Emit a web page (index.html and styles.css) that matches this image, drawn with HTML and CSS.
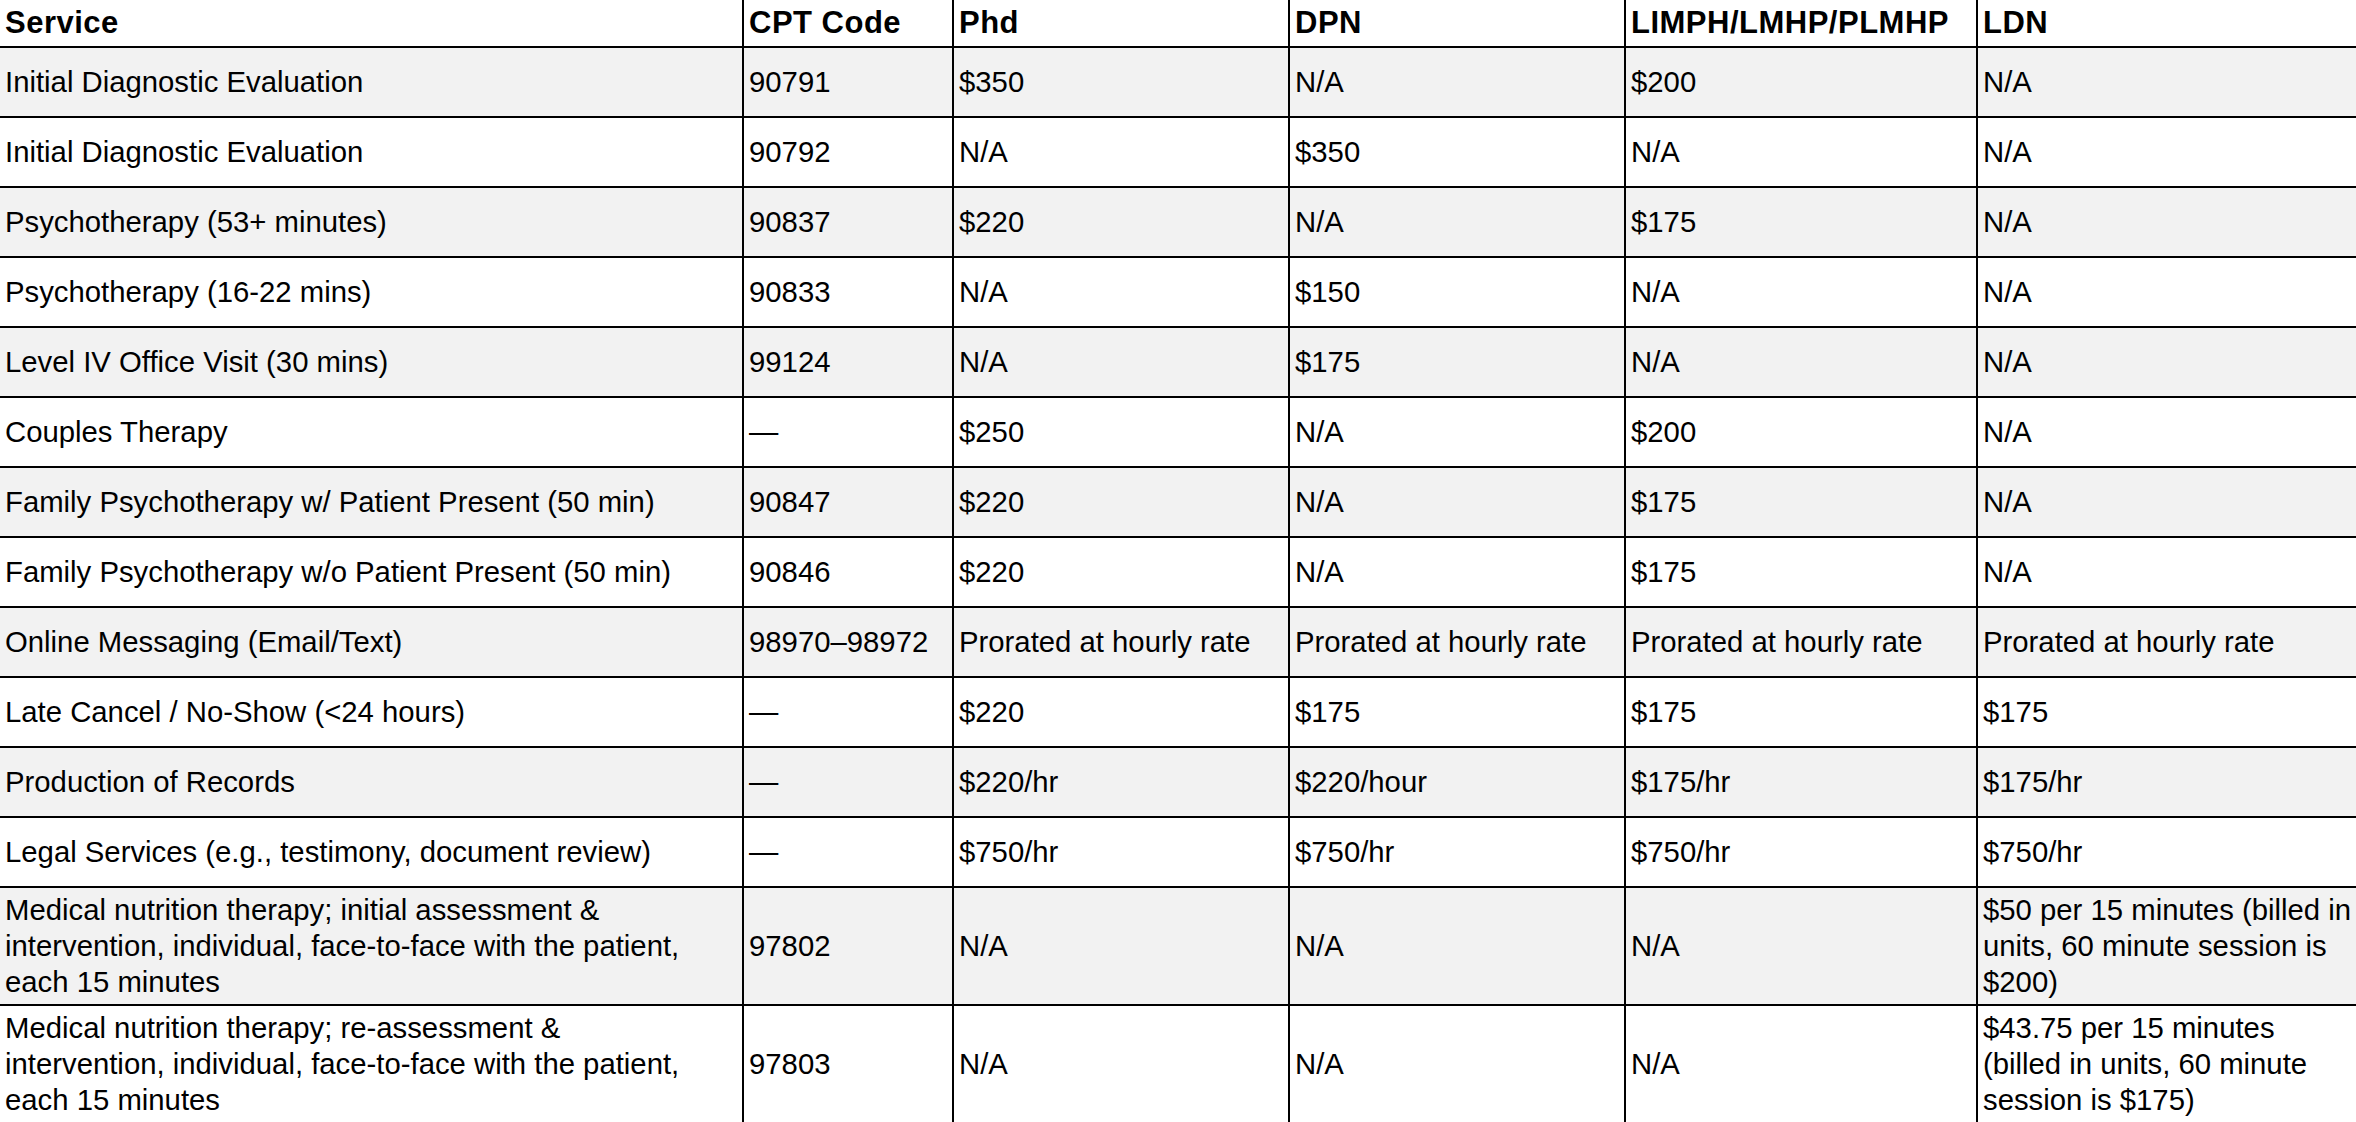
FILE: index.html
```html
<!DOCTYPE html>
<html lang="en">
<head>
<meta charset="utf-8">
<title>Fee Schedule</title>
<link rel="stylesheet" href="styles.css">
</head>
<body>
<table class="fees">
  <colgroup>
    <col class="c-service">
    <col class="c-cpt">
    <col class="c-phd">
    <col class="c-dpn">
    <col class="c-limph">
    <col class="c-ldn">
  </colgroup>
  <thead>
    <tr>
      <th>Service</th>
      <th>CPT Code</th>
      <th>Phd</th>
      <th>DPN</th>
      <th>LIMPH/LMHP/PLMHP</th>
      <th class="last">LDN</th>
    </tr>
  </thead>
  <tbody>
    <tr><td>Initial Diagnostic Evaluation</td><td>90791</td><td>$350</td><td>N/A</td><td>$200</td><td class="last">N/A</td></tr>
    <tr><td>Initial Diagnostic Evaluation</td><td>90792</td><td>N/A</td><td>$350</td><td>N/A</td><td class="last">N/A</td></tr>
    <tr><td>Psychotherapy (53+ minutes)</td><td>90837</td><td>$220</td><td>N/A</td><td>$175</td><td class="last">N/A</td></tr>
    <tr><td>Psychotherapy (16-22 mins)</td><td>90833</td><td>N/A</td><td>$150</td><td>N/A</td><td class="last">N/A</td></tr>
    <tr><td>Level IV Office Visit (30 mins)</td><td>99124</td><td>N/A</td><td>$175</td><td>N/A</td><td class="last">N/A</td></tr>
    <tr><td>Couples Therapy</td><td>—</td><td>$250</td><td>N/A</td><td>$200</td><td class="last">N/A</td></tr>
    <tr><td>Family Psychotherapy w/ Patient Present (50 min)</td><td>90847</td><td>$220</td><td>N/A</td><td>$175</td><td class="last">N/A</td></tr>
    <tr><td>Family Psychotherapy w/o Patient Present (50 min)</td><td>90846</td><td>$220</td><td>N/A</td><td>$175</td><td class="last">N/A</td></tr>
    <tr><td>Online Messaging (Email/Text)</td><td>98970–98972</td><td>Prorated at hourly rate</td><td>Prorated at hourly rate</td><td>Prorated at hourly rate</td><td class="last">Prorated at hourly rate</td></tr>
    <tr><td>Late Cancel / No-Show (&lt;24 hours)</td><td>—</td><td>$220</td><td>$175</td><td>$175</td><td class="last">$175</td></tr>
    <tr><td>Production of Records</td><td>—</td><td>$220/hr</td><td>$220/hour</td><td>$175/hr</td><td class="last">$175/hr</td></tr>
    <tr><td>Legal Services (e.g., testimony, document review)</td><td>—</td><td>$750/hr</td><td>$750/hr</td><td>$750/hr</td><td class="last">$750/hr</td></tr>
    <tr><td>Medical nutrition therapy; initial assessment &amp; intervention, individual, face-to-face with the patient, each 15 minutes</td><td>97802</td><td>N/A</td><td>N/A</td><td>N/A</td><td class="last">$50 per 15 minutes (billed in units, 60 minute session is $200)</td></tr>
    <tr><td>Medical nutrition therapy; re-assessment &amp; intervention, individual, face-to-face with the patient, each 15 minutes</td><td>97803</td><td>N/A</td><td>N/A</td><td>N/A</td><td class="last">$43.75 per 15 minutes (billed in units, 60 minute session is $175)</td></tr>
  </tbody>
</table>
</body>
</html>
```

FILE: styles.css
```css
html, body {
  margin: 0;
  padding: 0;
  background: #ffffff;
}

body {
  font-family: "Liberation Sans", Arial, Helvetica, sans-serif;
  color: #000000;
}

.fees {
  width: 2356px;
  table-layout: fixed;
  border-collapse: collapse;
  border-style: hidden;
}

.c-service { width: 743px; }
.c-cpt { width: 210px; }
.c-phd { width: 336px; }
.c-dpn { width: 336px; }
.c-limph { width: 352px; }
.c-ldn { width: 379px; }

.fees th,
.fees td {
  border: 2px solid #000000;
  text-align: left;
  vertical-align: middle;
  line-height: 36px;
}

.fees th {
  font-size: 31px;
  font-weight: 700;
  letter-spacing: 0.5px;
  padding: 5px 2px 5px 5px;
}

.fees td {
  box-sizing: border-box;
  height: 70px;
  font-size: 29.3px;
  font-weight: 400;
  padding: 4px 10px 4px 5px;
}

.fees td:first-child {
  padding-right: 22px;
}

.fees td.last {
  padding-right: 2px;
}

.fees tbody tr:nth-child(odd) {
  background: #f2f2f2;
}

.fees tbody tr:nth-child(even) {
  background: #ffffff;
}
```
